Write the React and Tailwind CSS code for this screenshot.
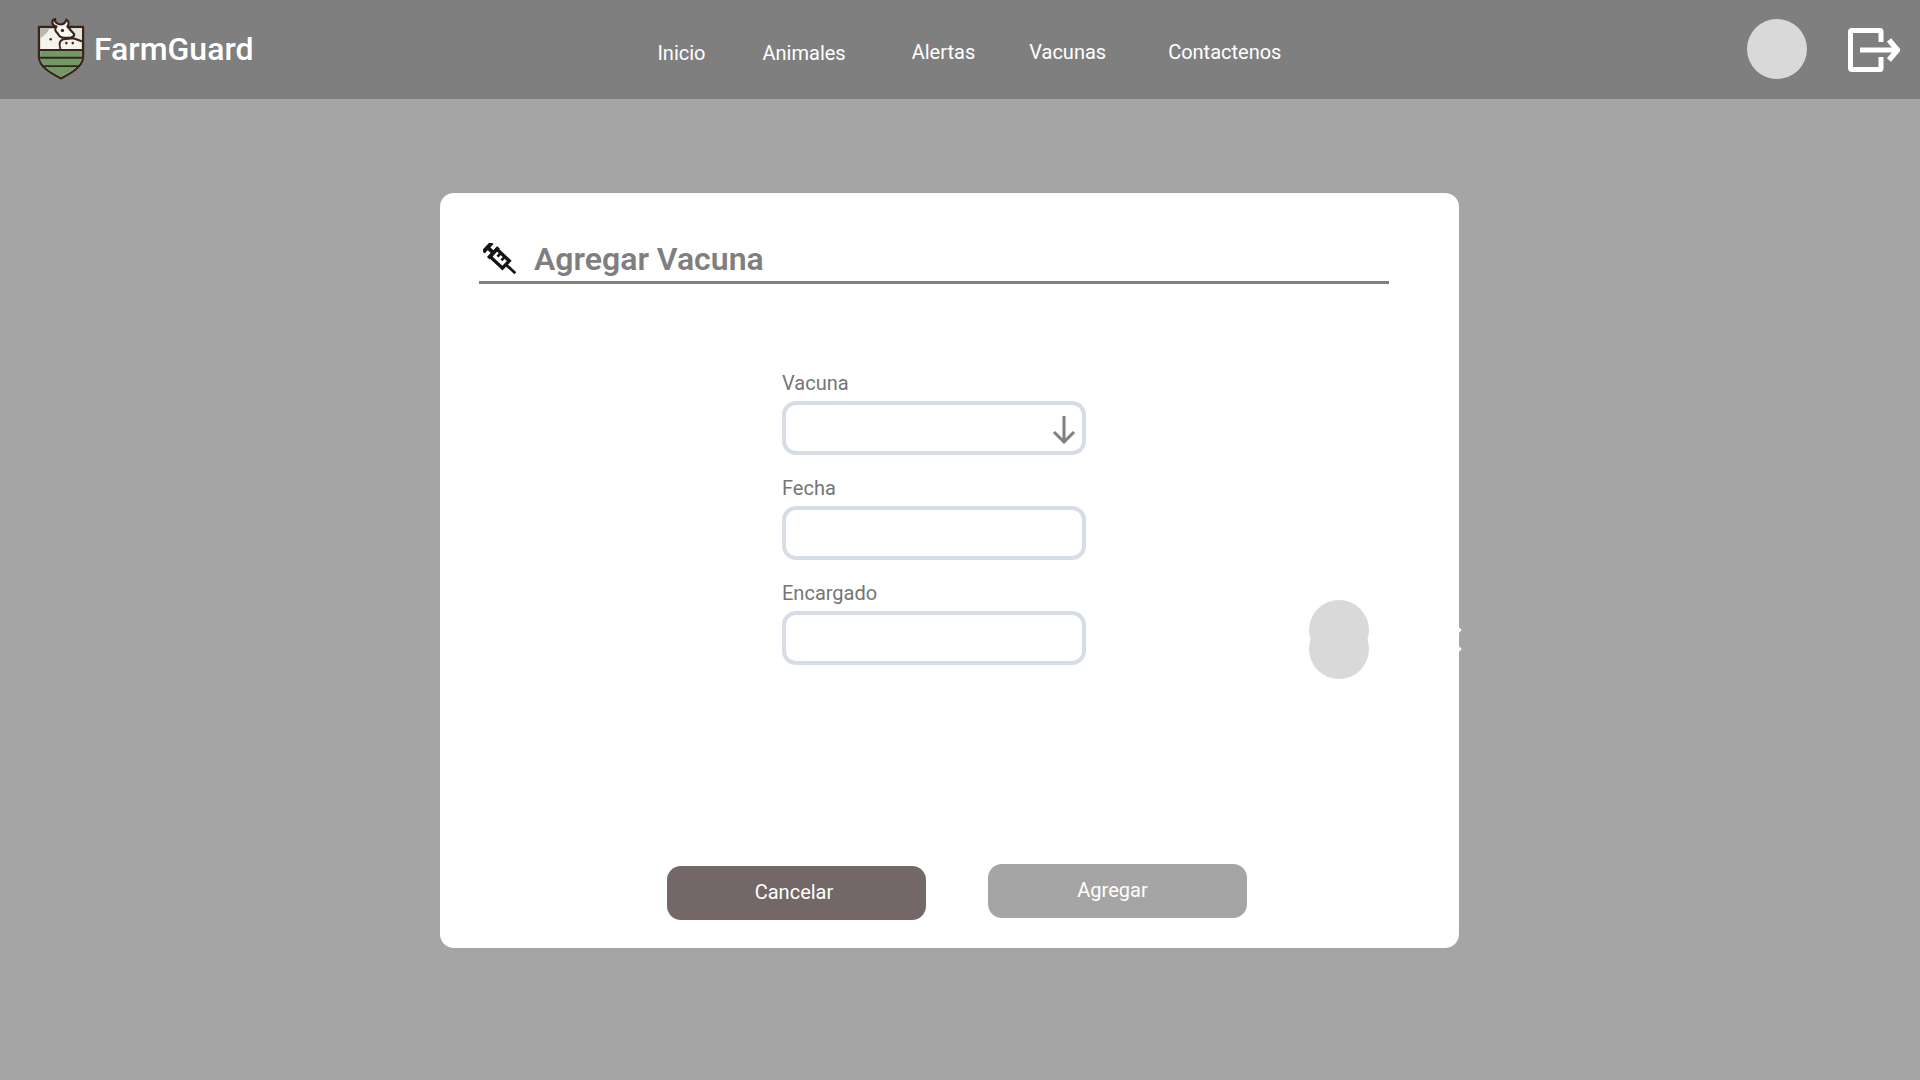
import React from "react";

const Logo = () => (
  <svg width="48" height="64" viewBox="0 0 49 64" fill="none">
    <path d="M2 9.500 H47 V40 C47 50 34 57 24.500 62 C15 57 2 50 2 40 Z" fill="#f5f3ec" stroke="#3a2418" strokeWidth="2.400" strokeLinejoin="round" />
    <path d="M3.200 33 H45.800 V40 C45.800 49 34 55.500 24.500 60.500 C15 55.500 3.200 49 3.200 40 Z" fill="#6f9a68" />
    <path d="M2.500 33 H46.500 M2.500 41 H46.500 M6 49.500 H43" stroke="#3a2418" strokeWidth="2" />
    <path d="M3.200 10.700 H13 C11 15 8 18 3.200 21 Z" fill="#b9b8ae" />
    <path d="M36 10.700 H45.800 V22 H38 Z" fill="#e6e5dc" />
    <path d="M20 9 C15 8 14 3 18.500 1.500 C18 4.500 20 6.500 24 7 C27 7 29 5.500 30 2 C33 3.500 32.500 7 31 9 L38 17 C38 20.500 33 21 28 20.500 C24 21 22.500 19 21 16 C18 13.500 18 11 20 9 Z" fill="#fbfaf5" stroke="#3a2418" strokeWidth="2.200" strokeLinejoin="round" />
    <path d="M24 32 C22 27 23 23 27 22 L37 21 C41 22 44 24 45.800 24" stroke="#3a2418" strokeWidth="2" />
    <circle cx="26" cy="13" r="1.700" fill="#3a2418" />
    <circle cx="14" cy="22" r="1.300" fill="#3a2418" />
    <circle cx="30" cy="26" r="1.300" fill="#3a2418" />
    <circle cx="36.500" cy="26" r="1.300" fill="#3a2418" />
  </svg>
);

const LogoutIcon = () => (
  <svg width="52" height="44" viewBox="0 0 52 44" fill="none" stroke="#ffffff" strokeWidth="5">
    <path d="M33 14 V3.500 C33 3 32.500 2.500 32 2.500 H4 C3 2.500 2.500 3 2.500 4 V40 C2.500 41 3 41.500 4 41.500 H32 C32.500 41.500 33 41 33 40.500 V29" strokeLinejoin="round" />
    <path d="M12 22 H48" />
    <path d="M41 12 L49.500 22 L41 32" strokeWidth="5.500" />
  </svg>
);

const SyringeIcon = () => (
  <svg width="34" height="32" viewBox="0 0 34 32" fill="none" stroke="#151515">
    <g transform="rotate(43 17 16)">
      <path d="M0 9.500 V22.500" strokeWidth="4" />
      <path d="M0 16 H8" strokeWidth="4" />
      <path d="M8 8.500 V23.500" strokeWidth="3.600" />
      <rect x="8" y="11" width="17" height="10" strokeWidth="3.400" />
      <path d="M13.500 11 V16 M19 11 V16" strokeWidth="2.600" />
      <path d="M25 16 H38" strokeWidth="2.800" />
    </g>
  </svg>
);

const Field = ({ label, arrow }) => (
  <div className="flex flex-col">
    <label className="text-[20px] leading-[24px] text-[#757575] mb-[6px]">{label}</label>
    <div className="relative w-[304px] h-[54px] rounded-[14px] border-4 border-[#d6dde6] bg-white">
      {arrow && (
        <svg className="absolute right-[5px] top-[10px]" width="26" height="29" viewBox="0 0 26 29" fill="none" stroke="#7f7f7f" strokeWidth="3">
          <path d="M13 1 V27 M3 17 L13 27 L23 17" />
        </svg>
      )}
    </div>
  </div>
);

export default function App() {
  return (
    <div className="relative h-[1080px] overflow-hidden bg-[#a5a5a5] font-['Roboto',sans-serif]">
      <header className="flex items-center h-[99px] bg-[#7f7f7f] text-white">
        <div className="ml-[37px] mt-[-2px]">
          <Logo />
        </div>
        <span className="ml-[9px] mt-[-2px] text-[32px] font-medium">FarmGuard</span>
        <nav className="flex text-[20px] ml-[404px] mt-[5px]">
          <a className="mt-[1px]">Inicio</a>
          <a className="ml-[57px] mt-[1px]">Animales</a>
          <a className="ml-[66px]">Alertas</a>
          <a className="ml-[54px]">Vacunas</a>
          <a className="ml-[62px]">Contactenos</a>
        </nav>
        <div className="ml-auto mt-[-2px] w-[60px] h-[60px] rounded-full bg-[#d9d9d9]" />
        <div className="ml-[41px] mr-[20px]">
          <LogoutIcon />
        </div>
      </header>

      <main className="pt-[94px] pl-[440px]">
        <section className="relative w-[1019px] h-[755px] rounded-[14px] bg-white">
          <div className="absolute right-[-2px] top-[435px] w-[4px] h-[4px] rotate-45 bg-white" />
          <div className="absolute right-[-2px] top-[454px] w-[4px] h-[4px] rotate-45 bg-white" />
          <div className="absolute left-[869px] top-[407px] w-[60px] h-[60px] rounded-full bg-[#d9d9d9]" />
          <div className="absolute left-[869px] top-[426px] w-[60px] h-[60px] rounded-full bg-[#d9d9d9]" />

          <div className="ml-[39px] mr-[70px] pt-[47px] h-[91px] flex items-start border-b-[3px] border-[#7f7f7f]">
            <div className="ml-[4px] mt-[3px]">
              <SyringeIcon />
            </div>
            <h1 className="ml-[17px] text-[32px] leading-[38px] font-semibold text-[#7f7f7f]">Agregar Vacuna</h1>
          </div>

          <div className="flex flex-col gap-[21px] mt-[87px] ml-[342px]">
            <Field label="Vacuna" arrow />
            <Field label="Fecha" />
            <Field label="Encargado" />
          </div>

          <div className="flex items-start mt-[199px] ml-[227px] text-white text-[20px]">
            <button className="w-[259px] h-[54px] mt-[2px] pr-[5px] pb-[2px] rounded-[14px] bg-[#746767]">Cancelar</button>
            <button className="w-[259px] h-[54px] ml-[62px] pr-[10px] pb-[2px] rounded-[14px] bg-[#a5a5a5]">Agregar</button>
          </div>
        </section>
      </main>
    </div>
  );
}
